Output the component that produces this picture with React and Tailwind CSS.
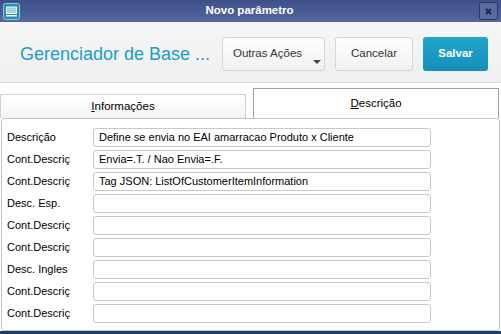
const rows = [
  { label: 'Descrição', value: 'Define se envia no EAI amarracao Produto x Cliente' },
  { label: 'Cont.Descriç', value: 'Envia=.T. / Nao Envia=.F.' },
  { label: 'Cont.Descriç', value: 'Tag JSON: ListOfCustomerItemInformation' },
  { label: 'Desc. Esp.', value: '' },
  { label: 'Cont.Descriç', value: '' },
  { label: 'Cont.Descriç', value: '' },
  { label: 'Desc. Ingles', value: '' },
  { label: 'Cont.Descriç', value: '' },
  { label: 'Cont.Descriç', value: '' },
];

const WindowIcon = () => (
  <svg width="17" height="17" viewBox="0 0 17 17">
    <rect x="0.5" y="0.5" width="16" height="16" rx="2" fill="#2b8cab" stroke="#8cc9da" />
    <rect x="3" y="3.5" width="11" height="7.5" fill="#e8f4f8" />
    <rect x="4" y="4.5" width="9" height="5.5" fill="#9fd3e3" />
    <rect x="3" y="12" width="11" height="1.5" fill="#e8f4f8" />
  </svg>
);

const App = () => {
  return (
    <div className="w-[501px] h-[334px] flex flex-col overflow-hidden bg-white" style={{ fontFamily: '"Liberation Sans", Arial, sans-serif' }}>
      {/* title bar */}
      <div className="h-[22px] shrink-0 flex items-center justify-between px-[3px] bg-gradient-to-b from-[#3e4e88] to-[#56669f]">
        <WindowIcon />
        <span className="text-white font-bold text-[11.5px]">Novo parâmetro</span>
        <div className="w-[19px] h-[18px] rounded-[2px] border border-[#2c3866] bg-[#5a6aa2] flex items-center justify-center">
          <svg width="7" height="7" viewBox="0 0 7 7">
            <path d="M1 1L6 6M6 1L1 6" stroke="#1e2440" strokeWidth="1.8" />
          </svg>
        </div>
      </div>

      {/* header */}
      <div className="h-[61px] shrink-0 flex items-start pt-[15px] pl-[20px] pr-[13px] bg-gradient-to-b from-[#f6f6f6] to-[#eeeff0] border-b border-[#d8d8d8]">
        <div className="flex-1 h-[34px] flex items-center text-[18px] text-[#1b9dca]">Gerenciador de Base ...</div>
        <div className="flex gap-[10px]">
          <button className="relative w-[103px] h-[34px] rounded-[3px] border border-[#d6d6d6] bg-gradient-to-b from-white to-[#f0f0f0] text-[11.5px] text-[#333] text-left pl-[10px]">
            Outras Ações
            <span className="absolute right-[3px] bottom-[6px] w-0 h-0 border-l-[4px] border-r-[4px] border-t-[4px] border-l-transparent border-r-transparent border-t-[#444]" />
          </button>
          <button className="w-[78px] h-[34px] rounded-[3px] border border-[#d6d6d6] bg-gradient-to-b from-white to-[#f0f0f0] text-[11.5px] text-[#333]">
            Cancelar
          </button>
          <button className="w-[65px] h-[34px] rounded-[3px] bg-gradient-to-b from-[#23a5cc] to-[#148fb9] text-[11.5px] font-bold text-white">
            Salvar
          </button>
        </div>
      </div>

      {/* tabs */}
      <div className="h-[35px] shrink-0 flex items-end gap-[7px]">
        <div className="w-[246px] h-[24px] border border-b-0 border-[#d0d0d0] bg-gradient-to-b from-white to-[#f4f4f4] flex items-center justify-center text-[11.5px] text-black">
          <span><span className="underline">I</span>nformações</span>
        </div>
        <div className="w-[246px] h-[30px] border border-b-0 border-[#a2a2a2] bg-white flex items-center justify-center text-[11.5px] text-black">
          <span><span className="underline">D</span>escrição</span>
        </div>
      </div>

      {/* panel */}
      <div className="flex-1 mx-[1px] border border-[#c4c4c4] rounded-[3px] pt-[9px] pl-[5px] flex flex-col gap-[3px]">
        {rows.map((r, i) => (
          <div key={i} className="flex items-center h-[19px]">
            <div className="w-[86px] text-[11px] text-black">{r.label}</div>
            <div className="w-[338px] h-[19px] border border-[#c8c8c8] rounded-[3px] bg-white flex items-center px-[5px] text-[11px] text-black">
              {r.value}
            </div>
          </div>
        ))}
      </div>

      <div className="h-[3px] shrink-0 bg-[#1c3c6c]" />
    </div>
  );
};

export default App;
